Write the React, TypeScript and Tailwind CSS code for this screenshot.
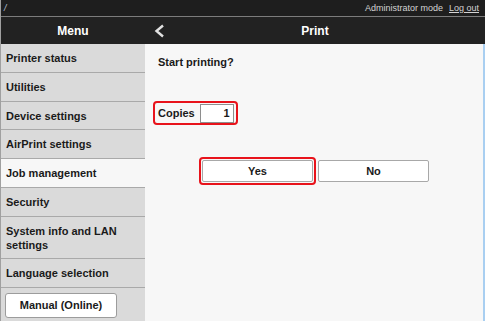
const menuItems = [
  { label: 'Printer status', h: 'h-[29px]' },
  { label: 'Utilities', h: 'h-[29px]' },
  { label: 'Device settings', h: 'h-[28px]' },
  { label: 'AirPrint settings', h: 'h-[29px]' },
  { label: 'Job management', h: 'h-[29px]', active: true },
  { label: 'Security', h: 'h-[29px]' },
  { label: 'System info and LAN settings', h: 'h-[42px]' },
  { label: 'Language selection', h: 'h-[29px]' },
];

export default function App() {
  return (
    <div className="w-[485px] h-[321px] flex flex-col overflow-hidden border-l border-[#a0a0a0] bg-[#f7f7f7] font-['Liberation_Sans',Arial,sans-serif] text-[#1a1a1a]">
      {/* top strip */}
      <div className="h-[17px] bg-[#1e1e1e] border-b border-[#7c7c7c] flex items-center justify-between pl-[3px] pr-[6px] text-[9px] leading-none text-[#d4d4d4]">
        <span className="italic text-[#b8c4d8]">/</span>
        <div className="flex items-center gap-[6px]">
          <span>Administrator mode</span>
          <span className="underline">Log out</span>
        </div>
      </div>

      {/* title bar */}
      <div className="h-[27px] bg-[#222222] flex text-white text-[12px] font-bold">
        <div className="w-[144px] flex items-center justify-center">Menu</div>
        <div className="flex-1 grid grid-cols-[40px_1fr_40px] items-center">
          <div className="pl-[9px] flex items-center">
            <svg width="11" height="14" viewBox="0 0 11 14">
              <polyline points="9,1.5 2.5,7 9,12.5" fill="none" stroke="#e2e2e2" strokeWidth="2.4" />
            </svg>
          </div>
          <div className="text-center">Print</div>
          <div />
        </div>
      </div>

      <div className="flex-1 flex min-h-0">
        {/* sidebar */}
        <div className="w-[144px] shrink-0 bg-[#dadada] flex flex-col text-[11px] font-bold">
          {menuItems.map((item) => (
            <div
              key={item.label}
              className={`${item.h} shrink-0 border-b border-[#a9a9a9] flex items-center px-[5px] leading-[14px] ${
                item.active ? 'bg-[#f7f7f7]' : ''
              }`}
            >
              {item.label === 'System info and LAN settings' ? (
                <span>
                  System info and LAN
                  <br />
                  settings
                </span>
              ) : (
                item.label
              )}
            </div>
          ))}
          <div className="pt-[5px] pl-[4px]">
            <button className="w-[112px] h-[25px] bg-white border border-[#9c9c9c] rounded-[3px] text-[11px] font-bold">
              Manual (Online)
            </button>
          </div>
        </div>

        {/* content */}
        <div className="flex-1 bg-[#f7f7f7] border-r-2 border-[#a9cff1] pl-[8px] pt-[12px] text-[11px] font-bold">
          <div className="ml-[5px] leading-[13px]">Start printing?</div>

          <div className="mt-[32px] inline-flex items-center h-[24px] pl-[3px] pr-[2px] gap-[5px] border-2 border-[#e8131b] rounded-[4px]">
            <span>Copies</span>
            <div className="w-[34px] h-[19px] bg-white border border-[#8e8e8e] flex items-center justify-end pr-[3px] text-[11px]">
              1
            </div>
          </div>

          <div className="mt-[32px] flex justify-center gap-[2px] pr-[8px]">
            <div className="p-[1px] border-2 border-[#e8131b] rounded-[4px]">
              <button className="w-[111px] h-[22px] bg-white border border-[#a8a8a8] rounded-[2px] text-[11px] font-bold">
                Yes
              </button>
            </div>
            <div className="pt-[3px]">
              <button className="w-[111px] h-[22px] bg-white border border-[#a8a8a8] rounded-[2px] text-[11px] font-bold">
                No
              </button>
            </div>
          </div>
        </div>
      </div>
    </div>
  );
}
